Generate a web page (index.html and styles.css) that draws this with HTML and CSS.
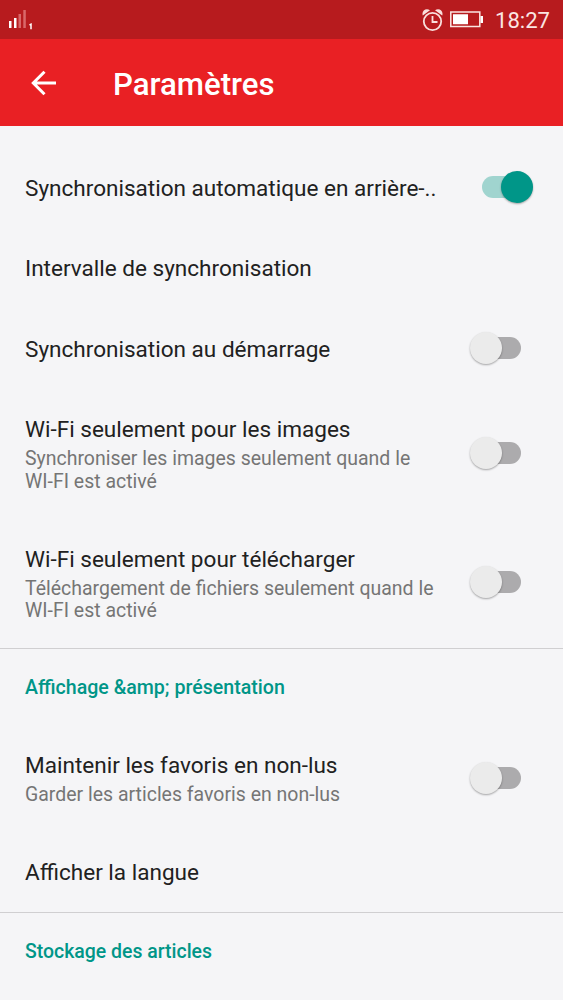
FILE: index.html
```html
<!DOCTYPE html>
<html lang="fr">
<head>
<meta charset="utf-8">
<title>Paramètres</title>
<link rel="stylesheet" href="styles.css">
</head>
<body>
<div class="status">
  <svg class="signal" width="26" height="20" viewBox="0 0 26 20"><path d="M1 11h2.500v7H1zM6 8h2.500v10H6z" fill="#fff"/><path d="M10.500 4h2.500v14h-2.500zM15.300 0h2.500v18h-2.500z" fill="#d9686a"/><path d="M21.500 15l1.500-.8v5" fill="none" stroke="#fff" stroke-width="1.500"/></svg>
  <div class="status-right">
    <svg class="alarm" width="22" height="24" viewBox="0 0 22 24"><g fill="none" stroke="#f9dfdc" stroke-width="1.800"><circle cx="10.500" cy="13.500" r="8.700"/><path d="M10.500 8v6h5"/></g><path d="M.8 7.500C-.8 3 3.800-.5 8 2.200zM20.200 7.500c1.600-4.500-3-8-7.200-5.300z" fill="#f9dfdc"/></svg>
    <svg class="battery" width="33" height="17" viewBox="0 0 33 17"><rect x=".8" y="1" width="29" height="14.500" fill="none" stroke="#fbe5e2" stroke-width="1.500"/><path d="M3 3.200h15v10H3zM30.500 5h2.500v7h-2.500z" fill="#fff"/></svg>
    <span class="clock">18:27</span>
  </div>
</div>
<header class="bar">
  <svg class="back" width="26" height="26" viewBox="0 0 26 26" fill="none" stroke="#fff" stroke-width="3"><path d="M25 13H3M13.500 1.700L2.300 13l11.200 11.300"/></svg>
  <h1 class="heading">Paramètres</h1>
</header>
<main class="list">
  <div class="row r1"><div class="title">Synchronisation automatique en arrière-..</div><i class="switch on"></i></div>
  <div class="row r2"><div class="title">Intervalle de synchronisation</div></div>
  <div class="row r3"><div class="title">Synchronisation au démarrage</div><i class="switch"></i></div>
  <div class="row r4"><div class="text"><div class="title">Wi-Fi seulement pour les images</div><div class="sub">Synchroniser les images seulement quand le<br>WI-FI est activé</div></div><i class="switch"></i></div>
  <div class="row r4 last"><div class="text"><div class="title">Wi-Fi seulement pour télécharger</div><div class="sub">Téléchargement de fichiers seulement quand le<br>WI-FI est activé</div></div><i class="switch"></i></div>
  <section class="group">
    <h2 class="section wide">Affichage &amp;amp; présentation</h2>
    <div class="row r5"><div class="text"><div class="title">Maintenir les favoris en non-lus</div><div class="sub">Garder les articles favoris en non-lus</div></div><i class="switch"></i></div>
    <div class="row r6"><div class="title">Afficher la langue</div></div>
  </section>
  <section class="group"><h2 class="section">Stockage des articles</h2></section>
</main>
</body>
</html>
```
FILE: styles.css
```css
* { box-sizing: border-box; }
body { margin: 0; height: 1000px; overflow: hidden; background: #f5f5f7; font-family: Roboto, sans-serif; color: #212121; }
.status { height: 39px; background: #b71b1e; display: flex; justify-content: space-between; align-items: center; padding: 0 13px 0 8px; color: #fbe5e2; }
.status-right { display: flex; align-items: center; padding-top: 1px; }
.battery { margin: 0 12px 1px 6px; }
.alarm { margin-bottom: 1px; }
.clock { font-size: 22.100px; line-height: 26px; }
.bar { height: 87px; background: #e92024; display: flex; align-items: center; color: #fff; padding-left: 31px; }
.heading { margin: 5px 0 0 56px; font-size: 31.200px; font-weight: 500; line-height: 36px; }
.list { padding-top: 22px; }
.row { display: flex; align-items: center; justify-content: space-between; padding: 0 42px 0 25px; white-space: nowrap; }
.r1, .r2 { height: 80.500px; }
.r3 { height: 80px; }
.r1 { padding-right: 30px; }
.r4 { height: 129px; }
.r4.last { height: 129.500px; }
.text { padding-top: 1px; }
.last .text { padding-top: 2px; }
.r5 { height: 107px; }
.r6 { height: 80px; padding-top: 2px; }
.title { font-size: 22.550px; line-height: 29px; }
.sub { margin-top: 4px; font-size: 19.480px; line-height: 22.500px; color: #757575; }
.group { border-top: 1px solid #d0cfd1; }
.section { margin: 0; height: 76px; padding-left: 25px; font-size: 19.450px; line-height: 77px; font-weight: 500; color: #009688; }
.wide { font-size: 19.600px; }
.switch { position: relative; flex: none; width: 51px; height: 34px; margin-bottom: 1px; display: flex; align-items: center; }
.switch::before { content: ""; width: 49px; height: 22px; margin-left: 2px; border-radius: 11px; background: #acabad; }
.switch::after { content: ""; position: absolute; left: 0; top: 1px; width: 32px; height: 32px; border-radius: 50%; background: #ebebeb; box-shadow: 0 1px 2px #0005; }
.r1 .switch, .r3 .switch { margin-bottom: 2px; }
.switch.on::before { background: #a0d4cf; margin-left: 0; }
.switch.on::after { left: auto; right: 0; background: #009688; }
```
